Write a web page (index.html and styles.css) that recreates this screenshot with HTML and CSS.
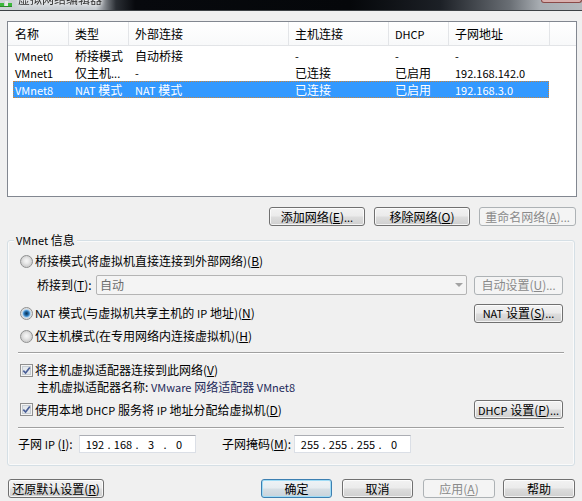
FILE: index.html
```html
<!DOCTYPE html>
<html lang="zh-CN">
<head>
<meta charset="utf-8">
<title>虚拟网络编辑器</title>
<link rel="stylesheet" href="styles.css">
</head>
<body>
<div class="title">
  <svg class="ticon" width="12" height="10" viewBox="0 0 12 10"><rect x="0" y="3" width="4" height="3" fill="#3cb83c"/><rect x="5" y="1" width="3" height="5" fill="#e8e8e8"/><rect x="8" y="3" width="4" height="3" fill="#3cb83c"/><rect x="0" y="6" width="12" height="1" fill="#2a8a2a"/></svg>
  <div class="ttext">虚拟网络编辑器</div>
  <div class="tclose"></div>
</div>
<div class="dlg">
  <div class="list">
    <div class="hdr">
      <div class="hc w1">名称</div>
      <div class="hc w2">类型</div>
      <div class="hc w3">外部连接</div>
      <div class="hc w4">主机连接</div>
      <div class="hc w5"><span class="l">DHCP</span></div>
      <div class="hc w6">子网地址</div>
      <div class="hc w7"></div>
    </div>
    <div class="rows">
      <div class="row">
        <div class="c c1 l">VMnet0</div>
        <div class="c c2">桥接模式</div>
        <div class="c c3">自动桥接</div>
        <div class="c c4 l">-</div>
        <div class="c c5 l">-</div>
        <div class="c c6 l">-</div>
      </div>
      <div class="row">
        <div class="c c1 l">VMnet1</div>
        <div class="c c2">仅主机<span class="l">...</span></div>
        <div class="c c3 l">-</div>
        <div class="c c4">已连接</div>
        <div class="c c5">已启用</div>
        <div class="c c6 l">192.168.142.0</div>
      </div>
      <div class="row sel">
        <div class="c c1 l">VMnet8</div>
        <div class="c c2"><span class="l">NAT</span> 模式</div>
        <div class="c c3"><span class="l">NAT</span> 模式</div>
        <div class="c c4">已连接</div>
        <div class="c c5">已启用</div>
        <div class="c c6 l">192.168.3.0</div>
      </div>
    </div>
  </div>

  <div class="toprow">
    <div class="btn b96"><span>添加网络(<u>E</u>)<span class="l">...</span></span></div>
    <div class="btn b96"><span>移除网络(<u>O</u>)</span></div>
    <div class="btn b97 dis"><span>重命名网络(<u>A</u>)<span class="l">...</span></span></div>
  </div>

  <div class="group">
    <div class="legend"><span class="l">VMnet</span> 信息</div>
    <div class="gr opt first">
      <span class="radio"></span>
      <span>桥接模式(将虚拟机直接连接到外部网络)(<u>B</u>)</span>
    </div>
    <div class="gr bridge">
      <span class="blabel">桥接到(<u>T</u>):</span>
      <div class="combo"><span>自动</span><span class="arrow"></span></div>
      <div class="btn b89 dis"><span>自动设置(<u>U</u>)<span class="l">...</span></span></div>
    </div>
    <div class="gr opt nat">
      <span class="radio on"></span>
      <span><span class="l">NAT</span> 模式(与虚拟机共享主机的 <span class="l">IP</span> 地址)(<u>N</u>)</span>
      <div class="btn b89 push"><span><span class="l">NAT</span> 设置(<u>S</u>)<span class="l">...</span></span></div>
    </div>
    <div class="gr opt host">
      <span class="radio"></span>
      <span>仅主机模式(在专用网络内连接虚拟机)(<u>H</u>)</span>
    </div>
    <div class="sep"></div>
    <div class="gr opt chk1">
      <svg class="cb" width="13" height="13" viewBox="0 0 13 13"><rect x="0.5" y="0.5" width="12" height="12" fill="#f4f4f4" stroke="#8f8f8f"/><rect x="2.5" y="2.5" width="8" height="8" fill="#e4e8ec" stroke="#c6ccd2"/><path d="M3.3 6.6 L5.6 9 L9.8 3.6" fill="none" stroke="#4a5f97" stroke-width="1.7"/></svg>
      <span>将主机虚拟适配器连接到此网络(<u>V</u>)</span>
    </div>
    <div class="gr adapter">
      <span>主机虚拟适配器名称: <span class="val"><span class="l">VMware</span> 网络适配器 <span class="l">VMnet8</span></span></span>
    </div>
    <div class="gr opt chk2">
      <svg class="cb" width="13" height="13" viewBox="0 0 13 13"><rect x="0.5" y="0.5" width="12" height="12" fill="#f4f4f4" stroke="#8f8f8f"/><rect x="2.5" y="2.5" width="8" height="8" fill="#e4e8ec" stroke="#c6ccd2"/><path d="M3.3 6.6 L5.6 9 L9.8 3.6" fill="none" stroke="#4a5f97" stroke-width="1.7"/></svg>
      <span>使用本地 <span class="l">DHCP</span> 服务将 <span class="l">IP</span> 地址分配给虚拟机(<u>D</u>)</span>
      <div class="btn b89 push"><span><span class="l">DHCP</span> 设置(<u>P</u>)<span class="l">...</span></span></div>
    </div>
    <div class="sep sep2"></div>
    <div class="gr subnet">
      <span class="slabel">子网 <span class="l">IP</span> (<u>I</u>):</span>
      <div class="ip l"><span class="f">192</span><span class="d">.</span><span class="f">168</span><span class="d">.</span><span class="f">3</span><span class="d">.</span><span class="f">0</span></div>
      <span class="mlabel">子网掩码(<u>M</u>):</span>
      <div class="ip l"><span class="f">255</span><span class="d">.</span><span class="f">255</span><span class="d">.</span><span class="f">255</span><span class="d">.</span><span class="f">0</span></div>
    </div>
  </div>

  <div class="botrow">
    <div class="btn b96 reset"><span>还原默认设置(<u>R</u>)</span></div>
    <div class="btn b71 def ok">确定</div>
    <div class="btn b71 g10">取消</div>
    <div class="btn b72 dis g10"><span>应用(<u>A</u>)</span></div>
    <div class="btn b72 g8">帮助</div>
  </div>
</div>
</body>
</html>
```
FILE: styles.css
```css
* { box-sizing: border-box; }
html, body { margin: 0; padding: 0; }
body {
  width: 582px;
  height: 501px;
  overflow: hidden;
  background: #f0f0f0;
  font-family: "Noto Sans CJK SC", "Noto Sans", sans-serif;
  font-size: 12px;
  line-height: 16px;
  color: #000;
}
.l { font-size: 11px; }
u { text-decoration: underline; text-underline-offset: 1px; }

/* title bar */
.title {
  height: 11px;
  border-bottom: 1px solid #3e4246;
  background: linear-gradient(90deg, #cdd2d6 0px, #c4c9ce 96px, #2a2e34 116px, #07090d 135px, #05070a 350px, #1c2026 440px, #6a6f75 510px, #a8adb2 540px, #b5b9bd 582px);
  display: flex;
  overflow: hidden;
}
.ticon { flex: none; }
.ttext {
  margin: -7px 0 0 6px;
  font-size: 12px;
  line-height: 12px;
  color: #333;
  text-shadow: 0 0 4px #fff, 0 0 6px #fff;
  filter: blur(0.5px);
}
.tclose {
  margin-left: auto;
  width: 41px;
  height: 3px;
  background: #d9b0ae;
  border: 1px solid #8a4a48;
  border-top: none;
  border-radius: 0 0 3px 3px;
}

/* dialog body */
.dlg {
  padding: 10px 0 0 7px;
  display: flex;
  flex-direction: column;
  align-items: flex-start;
}

/* list view */
.list {
  width: 570px;
  height: 176px;
  border: 1px solid #828790;
  background: #fff;
}
.hdr {
  display: flex;
  height: 24px;
  border-bottom: 1px solid #e2e4e7;
  background: linear-gradient(#ffffff, #f8f9fa);
}
.hc {
  display: flex;
  align-items: center;
  padding-left: 6px;
  border-right: 1px solid #e3e5e8;
  flex: none;
}
.w1 { width: 61px; padding-left: 7px; }
.w2 { width: 60px; }
.w3 { width: 160px; }
.w4 { width: 100px; }
.w5 { width: 60px; }
.w6 { width: 101px; }
.w7 { flex: 1; border-right: none; }

.rows { padding: 1px 0 0 5px; }
.row {
  display: flex;
  align-items: center;
  width: 536px;
  height: 17px;
}
.c { flex: none; white-space: nowrap; }
.c1 { width: 62px; padding-left: 2px; }
.c2 { width: 60px; }
.c3 { width: 160px; }
.c4 { width: 100px; }
.c5 { width: 60px; }
.c6 { width: 94px; }
.row.sel {
  background: #3399ff;
  color: #fff;
  outline: 1px dotted #c9853c;
  outline-offset: -1px;
}

/* buttons */
.btn {
  flex: none;
  height: 19px;
  border: 1px solid #707070;
  border-radius: 3px;
  background: linear-gradient(#f2f2f2 0%, #ebebeb 48%, #dddddd 52%, #cfcfcf 100%);
  box-shadow: inset 0 0 0 1px rgba(255, 255, 255, 0.75);
  display: flex;
  align-items: center;
  justify-content: center;
  white-space: nowrap;
  color: #000;
}
.btn.dis {
  border-color: #adb2b5;
  background: #f4f4f4;
  box-shadow: none;
  color: #8a8a8a;
}
.btn.def {
  border-color: #3c7fb1;
  box-shadow: inset 0 0 0 1px #9fdcf6;
  background: linear-gradient(#eef3f6 0%, #e6ecf0 48%, #d6dfe5 52%, #c9d3da 100%);
}
.b96 { width: 96px; }
.b97 { width: 97px; }
.b89 { width: 89px; }
.b71 { width: 71px; }
.b72 { width: 72px; }

.toprow {
  margin-top: 10px;
  width: 569px;
  display: flex;
  justify-content: flex-end;
  gap: 9px;
}

/* group box */
.group {
  margin-top: 14px;
  width: 568px;
  border: 1px solid #d5dfe5;
  border-radius: 3px;
  box-shadow: inset 0 0 0 1px #fafafa;
  padding: 0 0 12px 0;
  display: flex;
  flex-direction: column;
}
.legend {
  align-self: flex-start;
  margin: -8px 0 0 6px;
  padding: 0 2px;
  height: 14px;
  line-height: 14px;
  background: #f0f0f0;
}
.gr {
  display: flex;
  align-items: center;
  padding-right: 11px;
  white-space: nowrap;
}
.opt { padding-left: 12px; height: 18px; }
.first { margin-top: 5px; }
.bridge { margin-top: 5px; height: 20px; padding-left: 29px; }
.nat { margin-top: 8px; height: 20px; }
.host { margin-top: 4px; }
.chk1 { margin-top: 7px; }
.adapter { height: 16px; padding-left: 29px; }
.chk2 { margin-top: 5px; height: 19px; }
.subnet { margin-top: 6px; height: 18px; padding-left: 10px; }

.radio {
  flex: none;
  width: 13px;
  height: 13px;
  margin-right: 2px;
  border-radius: 50%;
  border: 1px solid #8e8f8f;
  background: radial-gradient(circle at 50% 45%, #f6f6f6 0, #e9e9e9 2.5px, #cfcfcf 5.5px, #e6e6e6 6.5px);
}
.radio.on {
  background: radial-gradient(circle at 50% 50%, #0f3558 0, #1d5f96 1.8px, #4c97d6 3px, #b7d4ec 4px, #dedede 5px, #f2f2f2 6.5px);
}
.cb { flex: none; margin-right: 2px; }

.blabel { width: 59px; flex: none; }
.combo {
  flex: none;
  width: 371px;
  height: 20px;
  border: 1px solid #b4b4b4;
  border-radius: 2px;
  background: #f4f4f4;
  color: #6d6d6d;
  padding-left: 3px;
  display: flex;
  align-items: center;
}
.arrow {
  margin-left: auto;
  margin-right: 3px;
  width: 0;
  height: 0;
  border-left: 4px solid transparent;
  border-right: 4px solid transparent;
  border-top: 4px solid #a3a3a3;
}
.bridge .btn { margin-left: 7px; }
.push { margin-left: auto; }

.val { color: #1e2a5a; }

.sep {
  margin: 7px 10px 0 10px;
  height: 2px;
  border-top: 1px solid #a0a0a0;
  border-bottom: 1px solid #ffffff;
}
.sep2 { margin-top: 8px; }

.slabel { width: 61px; flex: none; }
.mlabel { width: 72px; flex: none; margin-left: 26px; }
.ip {
  flex: none;
  width: 117px;
  height: 18px;
  background: #fff;
  border: 1px solid #dbdfe6;
  border-top-color: #abadb3;
  padding-left: 4px;
  display: flex;
  align-items: center;
}
.f { width: 22px; text-align: center; }
.d { width: 6px; text-align: center; }

/* bottom buttons */
.botrow {
  margin-top: 13px;
  width: 568px;
  display: flex;
}
.reset { margin-left: 1px; }
.ok { margin-left: auto; }
.g10 { margin-left: 10px; }
.g8 { margin-left: 8px; }
```
